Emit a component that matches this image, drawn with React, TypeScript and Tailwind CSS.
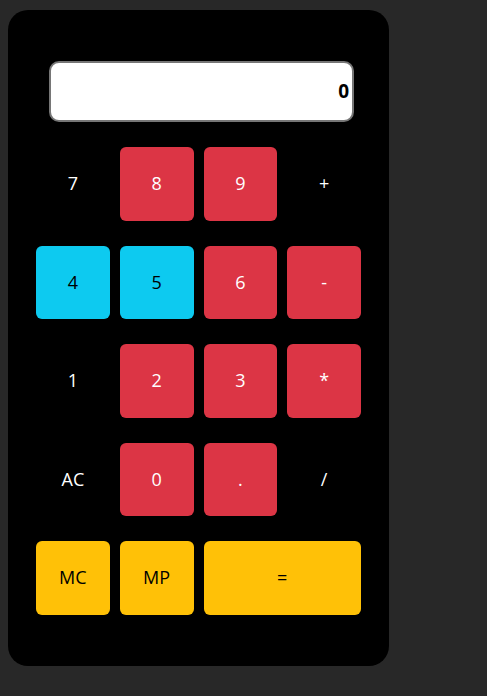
import React from "react";

type Key = {
    label: string;
    tone?: "red" | "cyan" | "yellow";
    wide?: boolean;
};

const keys: Key[] = [
    { label: "7" },
    { label: "8", tone: "red" },
    { label: "9", tone: "red" },
    { label: "+" },
    { label: "4", tone: "cyan" },
    { label: "5", tone: "cyan" },
    { label: "6", tone: "red" },
    { label: "-", tone: "red" },
    { label: "1" },
    { label: "2", tone: "red" },
    { label: "3", tone: "red" },
    { label: "*", tone: "red" },
    { label: "AC" },
    { label: "0", tone: "red" },
    { label: ".", tone: "red" },
    { label: "/" },
    { label: "MC", tone: "yellow" },
    { label: "MP", tone: "yellow" },
    { label: "=", tone: "yellow", wide: true },
];

function toneClass(tone?: Key["tone"]) {
    if (tone === "red") return "bg-[#dc3545] text-white";
    if (tone === "cyan") return "bg-[#0dcaf0] text-black";
    if (tone === "yellow") return "bg-[#ffc107] text-black";
    return "bg-transparent text-white";
}

export default function App() {
    return (
        <div
            className="min-h-screen bg-[#282828] pl-[8px] pt-[10px]"
            style={{ fontFamily: '"Open Sans", "Noto Sans", sans-serif' }}
        >
            {/* Calculator body */}
            <div className="w-[381px] h-[656px] bg-black rounded-[20px] px-[28px] pt-[51px]">
                <div className="ml-[13px] w-[305px] h-[61px] bg-white border-2 border-[#767676] rounded-[10px] flex items-center justify-end pr-[3px]">
                    <span className="text-[19px] font-bold text-black">0</span>
                </div>

                <div className="grid grid-cols-4 gap-x-[10px] gap-y-[24.75px] mt-[25px]">
                    {keys.map((k) => (
                        <button
                            key={k.label}
                            className={`${k.wide ? "col-span-2" : ""} h-[73.75px] rounded-[6px] flex items-center justify-center text-[18px] ${toneClass(k.tone)}`}
                        >
                            {k.label}
                        </button>
                    ))}
                </div>
            </div>
        </div>
    );
}
